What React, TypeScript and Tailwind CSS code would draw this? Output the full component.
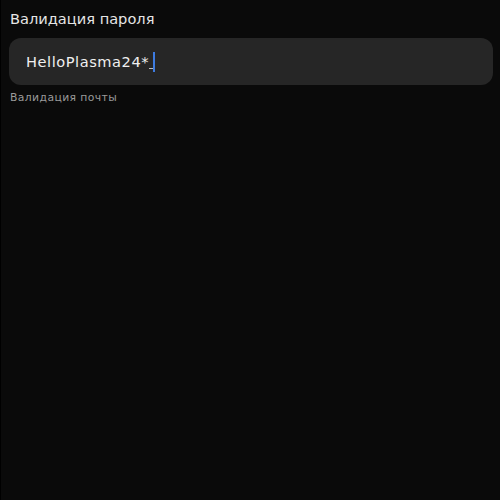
export default function App() {
  return (
    <div
      className="h-[500px] w-[500px] border-l border-black bg-[#0a0a0a] pl-[8px] pr-[7px] pt-[9px]"
      style={{ fontFamily: '"DejaVu Sans", sans-serif' }}
    >
      <div className="pl-[1px] text-[14.6px] leading-[20px] text-[#e6e6e6]">Валидация пароля</div>
      <div className="mt-[9px] flex h-[47px] items-center rounded-[12px] bg-[#262626] pl-[17px]">
        <span className="text-[14.6px] leading-[20px] tracking-[0.55px] text-[#f0f0f0]">HelloPlasma24*</span>
        <span className="mt-[14px] h-[1px] w-[4px] bg-[#bbbbbb]" />
        <span className="h-[20px] w-[2px] bg-[#3d7be0]" />
      </div>
      <div className="mt-[6px] pl-[1px] text-[10.8px] leading-[14px] tracking-[0.4px] text-[#9a9a9a]">Валидация почты</div>
    </div>
  );
}
